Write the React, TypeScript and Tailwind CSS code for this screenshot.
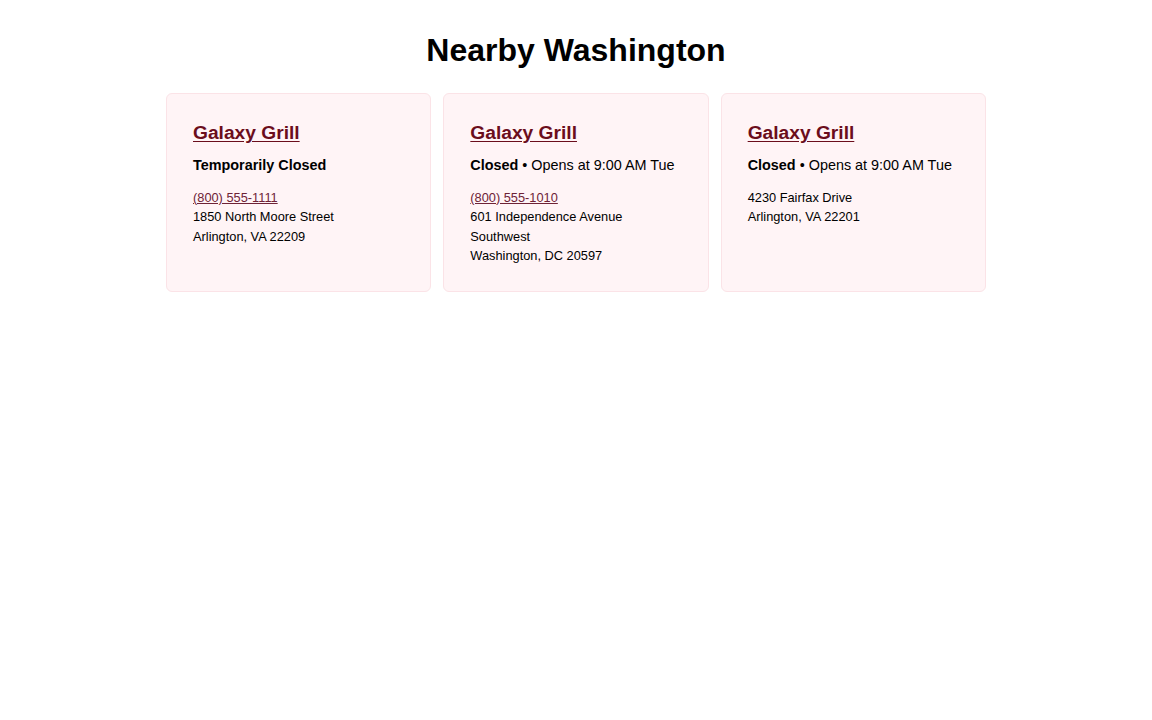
import React from "react";

interface ILocation {
  name: string;
  status: string;
  opens?: string;
  phone?: string;
  address: string[];
}

const locations: ILocation[] = [
  {
    name: "Galaxy Grill",
    status: "Temporarily Closed",
    phone: "(800) 555-1111",
    address: ["1850 North Moore Street", "Arlington, VA 22209"],
  },
  {
    name: "Galaxy Grill",
    status: "Closed",
    opens: "Opens at 9:00 AM Tue",
    phone: "(800) 555-1010",
    address: ["601 Independence Avenue", "Southwest", "Washington, DC 20597"],
  },
  {
    name: "Galaxy Grill",
    status: "Closed",
    opens: "Opens at 9:00 AM Tue",
    address: ["4230 Fairfax Drive", "Arlington, VA 22201"],
  },
];

const LocationCard = ({ location }: { location: ILocation }) => {
  return (
    <div className="bg-[#fff4f6] border border-[#fbe3e7] rounded-md px-[26px] pt-[27px] pb-[25px]">
      <a
        href="#"
        className="block text-[19.2px] leading-[23px] font-bold text-[#6b0d1c] underline underline-offset-2"
      >
        {location.name}
      </a>
      <p className="mt-[11px] text-[14.4px] leading-[21.6px] text-black">
        <span className="font-bold">{location.status}</span>
        {location.opens && <> &bull; {location.opens}</>}
      </p>
      <div className="mt-[10.6px] text-[12.8px] leading-[19.5px] text-black">
        {location.phone && (
          <a href="#" className="block text-[#6e2236] underline">
            {location.phone}
          </a>
        )}
        {location.address.map((line) => (
          <p key={line}>{line}</p>
        ))}
      </div>
    </div>
  );
};

export default function App() {
  return (
    <div className="min-h-screen bg-white pt-[31px] font-['Liberation_Sans',Arial,sans-serif]">
      <h1 className="text-center text-[32px] leading-[38.4px] font-bold text-black">
        Nearby Washington
      </h1>
      <div className="mx-auto mt-6 grid max-w-[820px] grid-cols-3 gap-3">
        {locations.map((location, i) => (
          <LocationCard location={location} key={i} />
        ))}
      </div>
    </div>
  );
}
